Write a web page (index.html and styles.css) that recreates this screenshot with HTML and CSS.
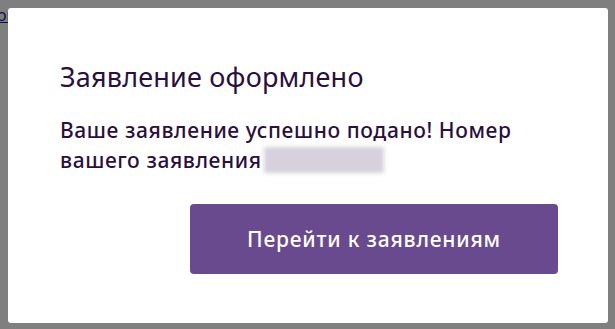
FILE: index.html
```html
<!DOCTYPE html>
<html lang="ru">
<head>
<meta charset="utf-8">
<link rel="stylesheet" href="styles.css">
</head>
<body>
<div class="page">
  <a class="back-link" href="#">ой</a>
</div>
<div class="overlay">
  <div class="modal">
    <h2 class="modal-title">Заявление оформлено</h2>
    <p class="modal-text">Ваше заявление успешно подано! Номер вашего заявления<span class="hidden-number"></span></p>
    <div class="modal-actions">
      <button class="btn-primary" type="button">Перейти к заявлениям</button>
    </div>
  </div>
</div>
</body>
</html>
```
FILE: styles.css
```css
html, body {
  margin: 0;
  padding: 0;
  width: 615px;
  height: 329px;
  overflow: hidden;
  background: #ffffff;
  font-family: "Noto Sans", "DejaVu Sans", sans-serif;
}

.page {
  padding-top: 4px;
}

.back-link {
  display: inline-block;
  margin-left: -3px;
  font-size: 16px;
  color: #1a1aa6;
  text-decoration: underline;
}

.overlay {
  position: fixed;
  inset: 0;
  background: rgba(0, 0, 0, 0.5);
  display: flex;
  align-items: flex-start;
  padding: 8px 7px 6px 8px;
}

.modal {
  box-sizing: border-box;
  width: 600px;
  height: 315px;
  background: #ffffff;
  border-radius: 3px;
  padding: 52px 50px 0 52px;
  display: flex;
  flex-direction: column;
}

.modal-title {
  margin: 0;
  font-size: 27px;
  line-height: 34px;
  font-weight: 400;
  letter-spacing: 0.2px;
  color: #2a0f40;
}

.modal-text {
  margin: 21px 0 0;
  max-width: 475px;
  font-size: 21px;
  line-height: 30px;
  font-weight: 500;
  letter-spacing: 0.6px;
  color: #2a0f40;
}

.hidden-number {
  display: inline-block;
  width: 120px;
  height: 26px;
  margin-left: 2px;
  vertical-align: -5px;
  background: #d6d1dc;
  filter: blur(2px);
}

.modal-actions {
  display: flex;
  justify-content: flex-end;
  margin-top: 29px;
}

.btn-primary {
  width: 368px;
  height: 70px;
  border: none;
  border-radius: 4px;
  background: #6a4a8e;
  color: #ffffff;
  font-family: inherit;
  font-size: 21px;
  font-weight: 500;
  letter-spacing: 0.8px;
  cursor: pointer;
}
```
